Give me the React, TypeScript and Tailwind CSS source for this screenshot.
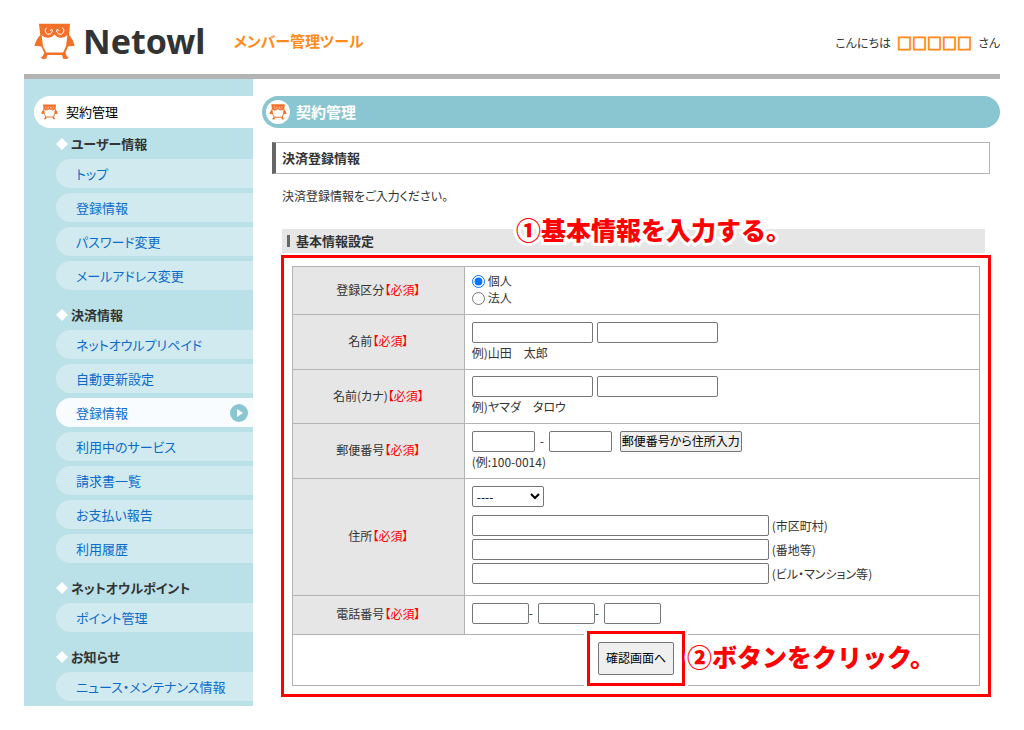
import { useState, type ReactNode } from "react";

interface MenuSection {
  title: string;
  items: string[];
  active?: number;
}

const menu: MenuSection[] = [
  { title: "ユーザー情報", items: ["トップ", "登録情報", "パスワード変更", "メールアドレス変更"] },
  {
    title: "決済情報",
    items: ["ネットオウルプリペイド", "自動更新設定", "登録情報", "利用中のサービス", "請求書一覧", "お支払い報告", "利用履歴"],
    active: 2
  },
  { title: "ネットオウルポイント", items: ["ポイント管理"] },
  { title: "お知らせ", items: ["ニュース・メンテナンス情報"] }
];

const inputClass = "h-[21px] rounded-[2px] border border-[#767676] bg-white px-1 text-xs";

function Owl({ className }: { className: string }) {
  return (
    <svg viewBox="42 40 124 112" className={className} aria-hidden="true">
      <path fill="#f37029" d="M57 42H151L148 76Q160 88 165 109L145 111L137 130L141 140L147 145L141 149L130 148L127 137H82L79 148L68 149L62 145L69 140L73 130L64 111L43 109Q49 88 61 76Z" />
      <path fill="#fff" d="M65 76Q76 88 90 84Q98 82 104 75Q110 82 118 84Q132 88 143 76L139 110L130 129H79L69 110Z" />
      <g fill="none" stroke="#fff" strokeWidth="3" strokeLinecap="round">
        <path d="M79 55A11 11 0 1 0 97 60Q93 58 91 63" />
        <path d="M129 55A11 11 0 1 1 111 60Q115 58 117 63" />
      </g>
    </svg>
  );
}

function Row({ label, height, children }: { label: string; height: string; children: ReactNode }) {
  return (
    <tr className={height}>
      <th scope="row" className="w-1/4 border border-[#b3b3b3] bg-[#e6e6e6] pb-0.5 text-center font-normal">
        {label}<span className="text-[#ff0000]">【必須】</span>
      </th>
      <td className="border border-[#b3b3b3] px-[7px] pb-0.5">{children}</td>
    </tr>
  );
}

function Sidebar() {
  return (
    <nav className="w-[229px] shrink-0 bg-[#b9e1e7] pt-[17px] text-[13px]">
      <div className="ml-2.5 flex h-8 items-center gap-2 rounded-l-full bg-white pl-[7px] text-black">
        <Owl className="h-4 w-[17px]" />
        契約管理
      </div>
      {menu.map((section, i) => (
        <section key={section.title}>
          <h2 className={`flex items-center gap-[3px] pl-8 font-bold ${i === 0 ? "h-[31px]" : "h-[35px] pt-1"}`}>
            <svg viewBox="0 0 12 12" className="h-3 w-3" aria-hidden="true"><path fill="#fff" d="M6 0L12 6L6 12L0 6Z" /></svg>
            {section.title}
          </h2>
          <ul className="ml-8 flex flex-col gap-[5px] pb-[5px]">
            {section.items.map((item, n) => (
              <li key={n}>
                <a href="#" className={`flex h-[29px] items-center justify-between rounded-l-full pr-[5px] pl-5 text-[#0b6bcb] ${section.active === n ? "bg-[#f8fcfe]" : "bg-[#d1eaef]"}`}>
                  {item}
                  {section.active === n && (
                    <svg viewBox="0 0 18 18" className="h-[18px] w-[18px]" aria-hidden="true">
                      <circle cx="9" cy="9" r="9" fill="#8ac6d1" />
                      <path fill="#fff" d="M7 5L13 9L7 13Z" />
                    </svg>
                  )}
                </a>
              </li>
            ))}
          </ul>
        </section>
      ))}
    </nav>
  );
}

function Note({ children, className }: { children: ReactNode; className: string }) {
  return (
    <p className={`absolute text-[25px] leading-8 font-black whitespace-nowrap text-[#ff0000] [font-feature-settings:normal] [-webkit-text-stroke:6px_white] [paint-order:stroke_fill] ${className}`}>
      {children}
    </p>
  );
}

function BasicForm() {
  const [kind, setKind] = useState("個人");

  return (
    <form onSubmit={e => e.preventDefault()}>
      <table className="w-full table-fixed border-collapse text-xs leading-4">
        <tbody>
          <Row label="登録区分" height="h-12">
            {["個人", "法人"].map(k => (
              <label key={k} className="flex h-[17px] items-center gap-[3px]">
                <input type="radio" name="kind" checked={kind === k} onChange={() => setKind(k)} className="h-[13px] w-[13px]" />
                {k}
              </label>
            ))}
          </Row>
          <Row label="名前" height="h-[55px]">
            <div className="flex gap-1">
              <input aria-label="姓" className={`${inputClass} w-[121px]`} />
              <input aria-label="名" className={`${inputClass} w-[121px]`} />
            </div>
            <p className="mt-0.5">例)山田　太郎</p>
          </Row>
          <Row label="名前(カナ)" height="h-[54px]">
            <div className="flex gap-1">
              <input aria-label="セイ" className={`${inputClass} w-[121px]`} />
              <input aria-label="メイ" className={`${inputClass} w-[121px]`} />
            </div>
            <p className="mt-0.5">例)ヤマダ　タロウ</p>
          </Row>
          <Row label="郵便番号" height="h-[55px]">
            <div className="flex items-center">
              <input aria-label="郵便番号 上3桁" className={`${inputClass} w-[63px]`} />
              <span className="w-[14px] text-center">-</span>
              <input aria-label="郵便番号 下4桁" className={`${inputClass} w-[63px]`} />
              <button type="button" className="ml-2 h-[21px] w-[122px] rounded-[2px] border border-[#767676] bg-[#efefef] text-xs whitespace-nowrap text-black">
                郵便番号から住所入力
              </button>
            </div>
            <p className="mt-0.5">(例:100-0014)</p>
          </Row>
          <Row label="住所" height="h-[117px]">
            <select aria-label="都道府県" className="mb-2 block h-[21px] w-[72px] rounded-[2px] border border-[#767676] bg-white text-xs text-black">
              <option>----</option>
            </select>
            <div className="flex flex-col gap-[3px] pb-0.5">
              {["市区町村", "番地等", "ビル・マンション等"].map(l => (
                <label key={l} className="flex items-center gap-[3px]">
                  <input className={`${inputClass} w-[297px]`} />
                  ({l})
                </label>
              ))}
            </div>
          </Row>
          <Row label="電話番号" height="h-[39px]">
            <div className="flex items-center pb-0.5">
              <input aria-label="市外局番" className={`${inputClass} w-[57px]`} />
              <span className="w-[9px]">-</span>
              <input aria-label="市内局番" className={`${inputClass} w-[57px]`} />
              <span className="w-[9px]">-</span>
              <input aria-label="加入者番号" className={`${inputClass} w-[57px]`} />
            </div>
          </Row>
          <tr className="h-[51px]">
            <td colSpan={2} className="border border-[#b3b3b3] pb-1">
              <div className="relative mx-auto w-[76px]">
                <span className="pointer-events-none absolute -inset-[11px] border-3 border-[#ff0000] bg-white ring-3 ring-white" />
                <button type="submit" className="relative block h-[33px] w-full rounded-[2px] border border-[#767676] bg-[#efefef] text-xs text-black">
                  確認画面へ
                </button>
                <Note className="-top-0.5 left-[89px]">②ボタンをクリック。</Note>
              </div>
            </td>
          </tr>
        </tbody>
      </table>
    </form>
  );
}

export default function App() {
  return (
    <div className="bg-white px-6 pb-6 font-['Noto_Sans_CJK_JP',sans-serif] text-[#333] [font-feature-settings:'palt']">
      <header className="flex h-[79px] items-center border-b-5 border-[#b3b3b3] pt-2">
        <a href="#" className="flex items-center gap-2 pl-2.5">
          <Owl className="h-[37px] w-[41px]" />
          <span className="font-['Noto_Sans',sans-serif] text-[34px] leading-10 font-bold">Netowl</span>
        </a>
        <p className="ml-7 text-[15px] font-bold text-[#ff8c1a]">メンバー管理ツール</p>
        <p className="ml-auto flex items-center gap-1.5 pt-1 text-xs">
          こんにちは <b className="text-[15px] text-[#ff8c1a] [-webkit-text-stroke:1px_#ff8c1a]">□□□□□</b> さん
        </p>
      </header>

      <div className="flex items-start">
        <Sidebar />
        <main className="min-w-0 flex-1 pt-[17px] pl-[9px]">
          <h1 className="flex h-8 items-center gap-1.5 rounded-full bg-[#8ac6d1] pl-1 text-[15px] font-bold text-white">
            <span className="flex h-6 w-6 items-center justify-center rounded-full bg-white">
              <Owl className="h-4 w-[18px]" />
            </span>
            契約管理
          </h1>
          <div className="mx-2.5 mt-[14px]">
            <h2 className="flex h-8 items-center border border-l-4 border-[#b3b3b3] border-l-[#666] pl-1.5 text-[13px] font-bold">決済登録情報</h2>
            <p className="mt-3 pl-2.5 text-xs leading-5">決済登録情報をご入力ください。</p>
            <div className="relative mt-[23px] mr-[5px] ml-2.5">
              <h3 className="flex h-6 items-center gap-1.5 bg-[#e6e6e6] pl-[5px] text-[13px] font-bold">
                <span className="h-3 w-[3px] bg-[#666]" />
                基本情報設定
              </h3>
              <Note className="-top-4 left-[234px]">①基本情報を入力する。</Note>
            </div>
            <div className="mt-0.5 -mr-px ml-[9px] border-3 border-[#ff0000] p-2">
              <BasicForm />
            </div>
          </div>
        </main>
      </div>
    </div>
  );
}
